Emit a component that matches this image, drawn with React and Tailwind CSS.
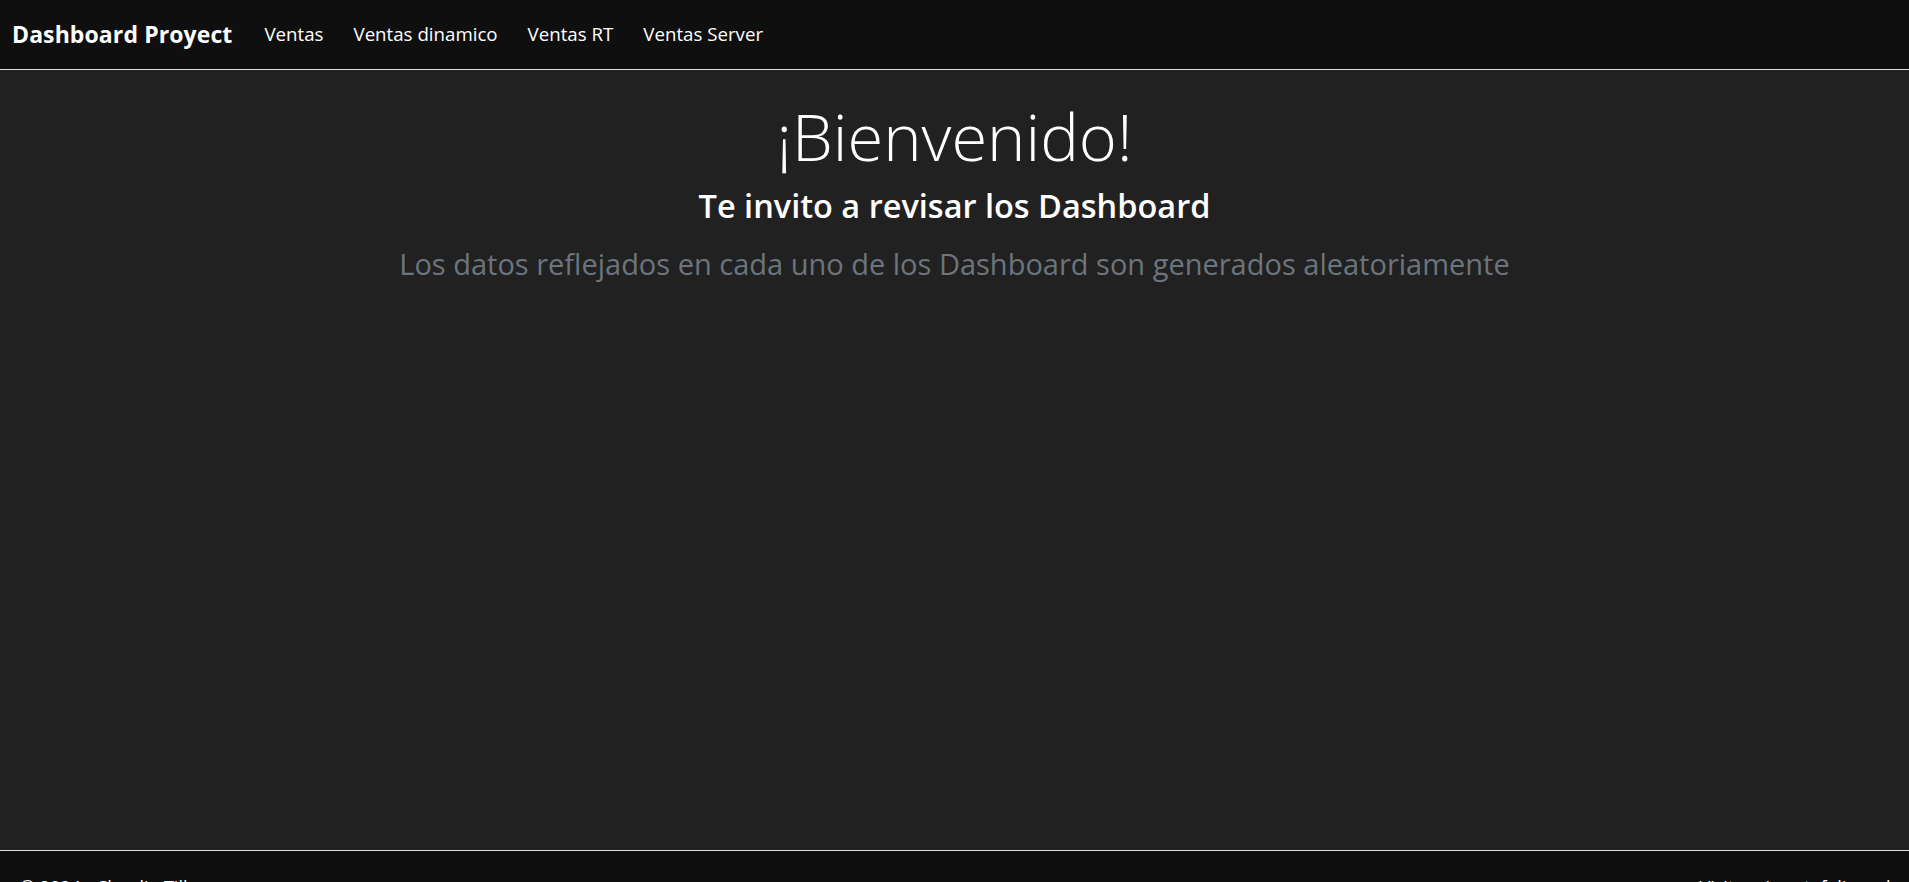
export default function App() {
  const font = { fontFamily: '"Open Sans", "Noto Sans", sans-serif' };
  return (
    <div className="min-h-screen bg-[#212121] text-white" style={font}>
      <nav className="h-[70px] bg-[#0f0f0f] border-b border-[#dee2e6] flex items-center pl-[12px]">
        <span className="text-[23px] font-bold tracking-[0.1px] mr-[32px]">Dashboard Proyect</span>
        <div className="flex items-center gap-[30px] text-[18.7px]">
          <a>Ventas</a>
          <a>Ventas dinamico</a>
          <a>Ventas RT</a>
          <a>Ventas Server</a>
        </div>
      </nav>
      <main className="h-[780px] flex flex-col items-center pt-[27px]">
        <h1 className="text-[65px] font-light leading-[1.2]">¡Bienvenido!</h1>
        <h2 className="text-[32.5px] font-semibold leading-[1.2] mt-[11px]">Te invito a revisar los Dashboard</h2>
        <p className="text-[29px] font-medium text-[#6c757d] leading-[1.5] mt-[17px]">Los datos reflejados en cada uno de los Dashboard son generados aleatoriamente</p>
      </main>
      <footer className="bg-[#0f0f0f] border-t border-[#dee2e6] flex justify-between pl-[20px] pr-[12px] pt-[23px] pb-[24px] text-[18px]">
        <span>© 2024 - Claudio Tillero</span>
        <span>Visita mi portafolio web</span>
      </footer>
    </div>
  );
}
